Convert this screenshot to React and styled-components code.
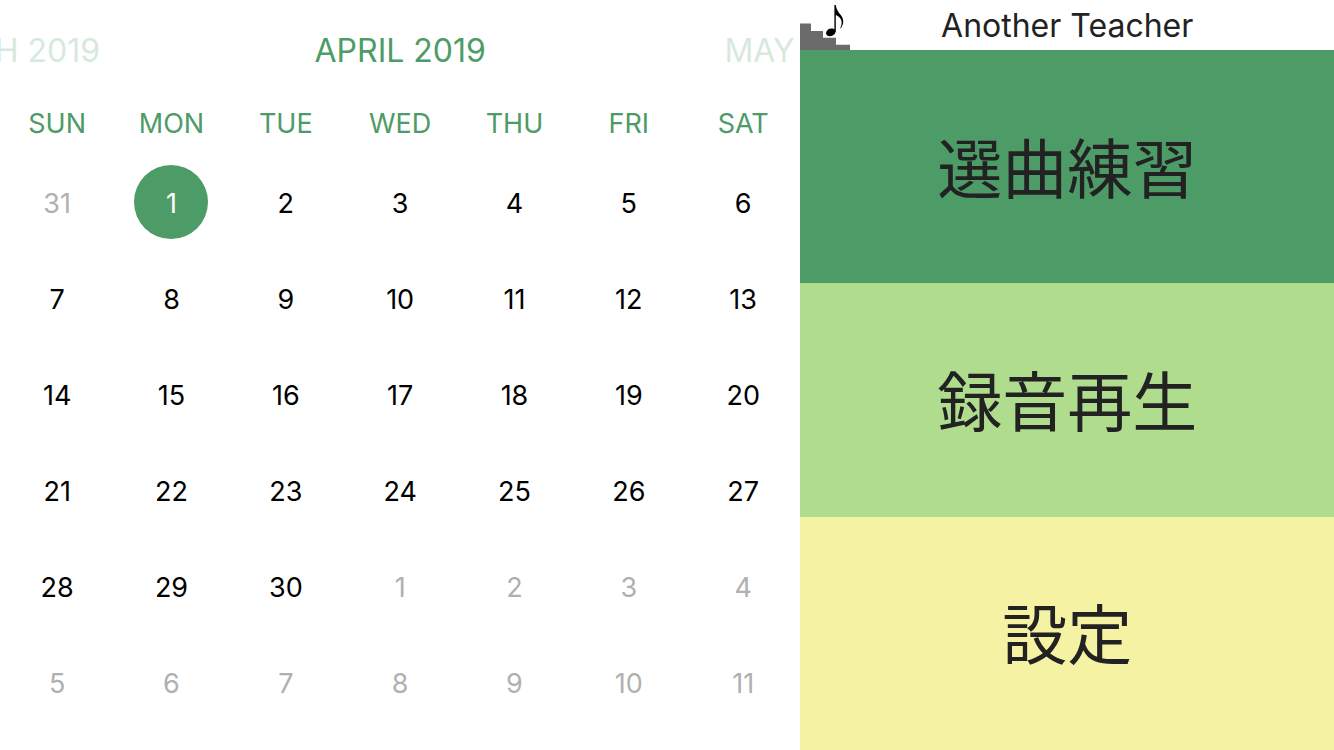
import React from "react";
import styled, { createGlobalStyle } from "styled-components";

const green = "#4d9b67";

const GlobalStyle = createGlobalStyle`
  * { box-sizing: border-box; }
  body {
    margin: 0;
    background: #fff;
    color: #222;
    font-family: Inter, "Noto Sans CJK JP", sans-serif;
  }
  button {
    border: 0;
    padding: 0;
    background: none;
    color: inherit;
    font: inherit;
    cursor: pointer;
  }
`;

const Page = styled.div`
  display: grid;
  grid-template-columns: 3fr 2fr;
  min-height: 100vh;
`;

const Calendar = styled.section`
  min-width: 0;
  overflow: hidden;
`;

const Months = styled.nav`
  display: flex;
  justify-content: center;
  height: 92px;
  padding-top: 10px;
`;

const MonthButton = styled.button`
  flex: 0 0 50%;
  color: ${green};
  font-size: 32px;
  line-height: 40px;
  white-space: nowrap;
  opacity: ${(p) => (p.$current ? 1 : 0.22)};
`;

const DaysTable = styled.table`
  width: 100%;
  table-layout: fixed;
  border-collapse: collapse;
  text-align: center;
`;

const Weekday = styled.th`
  height: 62px;
  padding: 0;
  color: ${green};
  font-size: 27px;
  font-weight: 400;
`;

const DayCell = styled.td`
  height: 96px;
  padding: 0;
`;

const DayButton = styled.button`
  width: 74px;
  height: 74px;
  padding-top: 4px;
  border-radius: 50%;
  background: ${(p) => (p.$selected ? green : "transparent")};
  color: ${(p) => (p.$selected ? "#fff" : p.$outside ? "#b0b0b0" : "#000")};
  font-size: 27px;
  line-height: 32px;
  vertical-align: middle;
`;

const Side = styled.main`
  display: flex;
  flex-direction: column;
  min-width: 0;
`;

const TitleBar = styled.header`
  display: grid;
  grid-template-columns: 50px 1fr 50px;
  align-items: center;
  height: 50px;
`;

const Title = styled.h1`
  margin: 0;
  padding-top: 2px;
  font-size: 32px;
  font-weight: 400;
  line-height: 40px;
  text-align: center;
  white-space: nowrap;
`;

const MenuButton = styled.button`
  flex: 1 1 0;
  padding-bottom: 4px;
  background: ${(p) => p.$color};
  color: #222;
  font-family: "Noto Sans CJK JP", sans-serif;
  font-size: 65px;
  font-weight: 400;
  line-height: 96px;
`;

function Logo() {
  return (
    <svg width="50" height="50" viewBox="0 0 50 50" aria-hidden="true">
      <path d="M0 23.5H11V31H23V37.7H36V44.7H50V50H0Z" fill="#6b6b6b" />
      <ellipse cx="30.8" cy="32.3" rx="4.9" ry="3.7" transform="rotate(-22 30.8 32.3)" />
      <path d="M34.4 5H35.8C36.2 9.5 38.4 12 40.6 14.8C44.4 19.5 43.8 24.2 40.8 28.4L40.3 28.1C42.3 23.8 42.2 20.6 39.6 17.6C38.4 16.2 37.2 15.4 35.8 15V31.8H34.4Z" />
    </svg>
  );
}

const weekdays = ["SUN", "MON", "TUE", "WED", "THU", "FRI", "SAT"];
const firstDay = new Date(2019, 2, 31);
const weeks = Array.from({ length: 6 }, (_, w) =>
  weekdays.map((_, d) => {
    const date = new Date(firstDay);
    date.setDate(firstDay.getDate() + w * 7 + d);
    return date;
  })
);

const menu = [
  { label: "選曲練習", color: "#4d9b67" },
  { label: "録音再生", color: "#afdd8d" },
  { label: "設定", color: "#f6f2a3" },
];

export default function App() {
  return (
    <Page>
      <GlobalStyle />
      <Calendar>
        <Months>
          <MonthButton>MARCH 2019</MonthButton>
          <MonthButton $current>APRIL 2019</MonthButton>
          <MonthButton>MAY 2019</MonthButton>
        </Months>
        <DaysTable>
          <thead>
            <tr>
              {weekdays.map((name) => (
                <Weekday key={name} scope="col">{name}</Weekday>
              ))}
            </tr>
          </thead>
          <tbody>
            {weeks.map((week, w) => (
              <tr key={w}>
                {week.map((date) => {
                  const inMonth = date.getMonth() === 3;
                  return (
                    <DayCell key={date.getTime()}>
                      <DayButton
                        $outside={!inMonth}
                        $selected={inMonth && date.getDate() === 1}
                      >
                        {date.getDate()}
                      </DayButton>
                    </DayCell>
                  );
                })}
              </tr>
            ))}
          </tbody>
        </DaysTable>
      </Calendar>
      <Side>
        <TitleBar>
          <Logo />
          <Title>Another Teacher</Title>
        </TitleBar>
        {menu.map(({ label, color }) => (
          <MenuButton key={label} $color={color}>{label}</MenuButton>
        ))}
      </Side>
    </Page>
  );
}
